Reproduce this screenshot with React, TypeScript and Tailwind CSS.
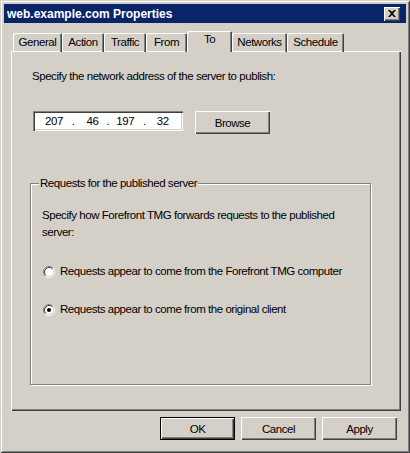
const tabs = [
  { label: "General", w: "w-[49px]" },
  { label: "Action", w: "w-[42px]" },
  { label: "Traffic", w: "w-[42px]" },
  { label: "From", w: "w-[41px]" },
  { label: "To", w: "w-[45px]", active: true },
  { label: "Networks", w: "w-[55px]" },
  { label: "Schedule", w: "w-[57px]" },
];

function Radio({ checked }: { checked?: boolean }) {
  return (
    <svg width="12" height="12" viewBox="0 0 12 12" className="shrink-0">
      <circle cx="6" cy="6" r="4.5" fill="#fff" />
      <path d="M2.11 9.89 A5.5 5.5 0 0 1 9.89 2.11" stroke="#808080" fill="none" />
      <path d="M9.89 2.11 A5.5 5.5 0 0 1 2.11 9.89" stroke="#fff" fill="none" />
      <path d="M2.82 9.18 A4.5 4.5 0 0 1 9.18 2.82" stroke="#404040" fill="none" />
      <path d="M9.18 2.82 A4.5 4.5 0 0 1 2.82 9.18" stroke="#d4d0c8" fill="none" />
      {checked && <circle cx="6" cy="6" r="2" fill="#000" />}
    </svg>
  );
}

function WinButton({ label, isDefault }: { label: string; isDefault?: boolean }) {
  return (
    <button
      type="button"
      className={
        isDefault
          ? "w-[75px] h-[23px] bg-[#d4d0c8] border border-black shadow-[inset_1px_1px_0_#fff,inset_-1px_-1px_0_#404040,inset_-2px_-2px_0_#808080] leading-[16px]"
          : "w-[75px] h-[23px] bg-[#d4d0c8] shadow-[inset_1px_1px_0_#fff,inset_-1px_-1px_0_#404040,inset_-2px_-2px_0_#808080] leading-[16px]"
      }
    >
      {label}
    </button>
  );
}

export default function App() {
  return (
    <div className="w-[410px] h-[453px] bg-[#d4d0c8] p-[4px] shadow-[inset_1px_1px_0_#d4d0c8,inset_-1px_-1px_0_#404040,inset_2px_2px_0_#fff,inset_-2px_-2px_0_#808080] font-['Liberation_Sans',Arial,sans-serif] text-[11.5px] tracking-[-0.45px] text-black">
      {/* title bar */}
      <div className="h-[19px] bg-[#0a246a] flex items-center justify-between pl-[3px] pr-[6px]">
        <div className="font-bold text-[12px] tracking-normal text-white leading-[14px]">
          web.example.com Properties
        </div>
        <button
          type="button"
          className="w-[16px] h-[14px] bg-[#d4d0c8] flex items-center justify-center shadow-[inset_1px_1px_0_#fff,inset_-1px_-1px_0_#404040,inset_-2px_-2px_0_#808080]"
        >
          <svg width="8" height="7" viewBox="0 0 8 7">
            <path d="M0 0 L2 0 L4 2 L6 0 L8 0 L5 3.5 L8 7 L6 7 L4 5 L2 7 L0 7 L3 3.5 Z" fill="#000" />
          </svg>
        </button>
      </div>

      <div className="pl-[7px] pr-[5px]">
        {/* tabs */}
        <div className="relative z-10 mt-[8px] -mb-px ml-[2px] h-[21px] flex items-end">
          {tabs.map((t) =>
            t.active ? (
              <div
                key={t.label}
                className={`${t.w} h-[21px] bg-[#d4d0c8] rounded-t-[2px] shadow-[inset_1px_1px_0_#fff,inset_-1px_0_0_#404040,inset_-2px_0_0_#808080] text-center leading-[14px] pt-[1px]`}
              >
                {t.label}
              </div>
            ) : (
              <div
                key={t.label}
                className={`${t.w} h-[19px] bg-[#d4d0c8] rounded-t-[2px] shadow-[inset_1px_1px_0_#fff,inset_-1px_0_0_#404040,inset_-2px_0_0_#808080,inset_0_-1px_0_#fff] text-center leading-[14px] pt-[2px]`}
              >
                {t.label}
              </div>
            )
          )}
        </div>

        {/* panel */}
        <div className="h-[360px] flex flex-col pl-[19px] pr-[26px] pt-[17px] shadow-[inset_1px_1px_0_#fff,inset_-1px_-1px_0_#404040,inset_-2px_-2px_0_#808080]">
          <div className="ml-[2px] leading-[16px]">Specify the network address of the server to publish:</div>

          <div className="ml-[3px] mt-[27px] flex items-start gap-[12px]">
            <div className="w-[150px] h-[20px] bg-white shadow-[inset_1px_1px_0_#808080,inset_2px_2px_0_#404040,inset_-1px_-1px_0_#fff,inset_-2px_-2px_0_#d4d0c8] flex items-center pl-[12px] leading-[16px]">
              <span>207</span>
              <span className="ml-[9px]">.</span>
              <span className="ml-[12px]">46</span>
              <span className="ml-[8px]">.</span>
              <span className="ml-[7px]">197</span>
              <span className="ml-[9px]">.</span>
              <span className="ml-[11px]">32</span>
            </div>
            <WinButton label="Browse" />
          </div>

          <fieldset className="mt-[41px] h-[210px] w-[341px] px-0 border border-[#808080] shadow-[inset_1px_1px_0_#fff,1px_1px_0_#fff]">
            <legend className="ml-[8px] px-[1px] leading-[16px] bg-[#d4d0c8]">Requests for the published server</legend>
            <div className="pl-[11px] pt-[16px]">
              <div className="leading-[17px]">
                Specify how Forefront TMG forwards requests to the published
                <br />
                server:
              </div>
              <div className="mt-[22px] h-[17px] flex items-center gap-[5px] ml-[1px]">
                <Radio />
                <span>Requests appear to come from the Forefront TMG computer</span>
              </div>
              <div className="mt-[21px] h-[17px] flex items-center gap-[5px] ml-[1px]">
                <Radio checked />
                <span>Requests appear to come from the original client</span>
              </div>
            </div>
          </fieldset>
        </div>

        {/* dialog buttons */}
        <div className="mt-[6px] flex justify-end gap-[6px] pr-[4px]">
          <WinButton label="OK" isDefault />
          <WinButton label="Cancel" />
          <WinButton label="Apply" />
        </div>
      </div>
    </div>
  );
}
